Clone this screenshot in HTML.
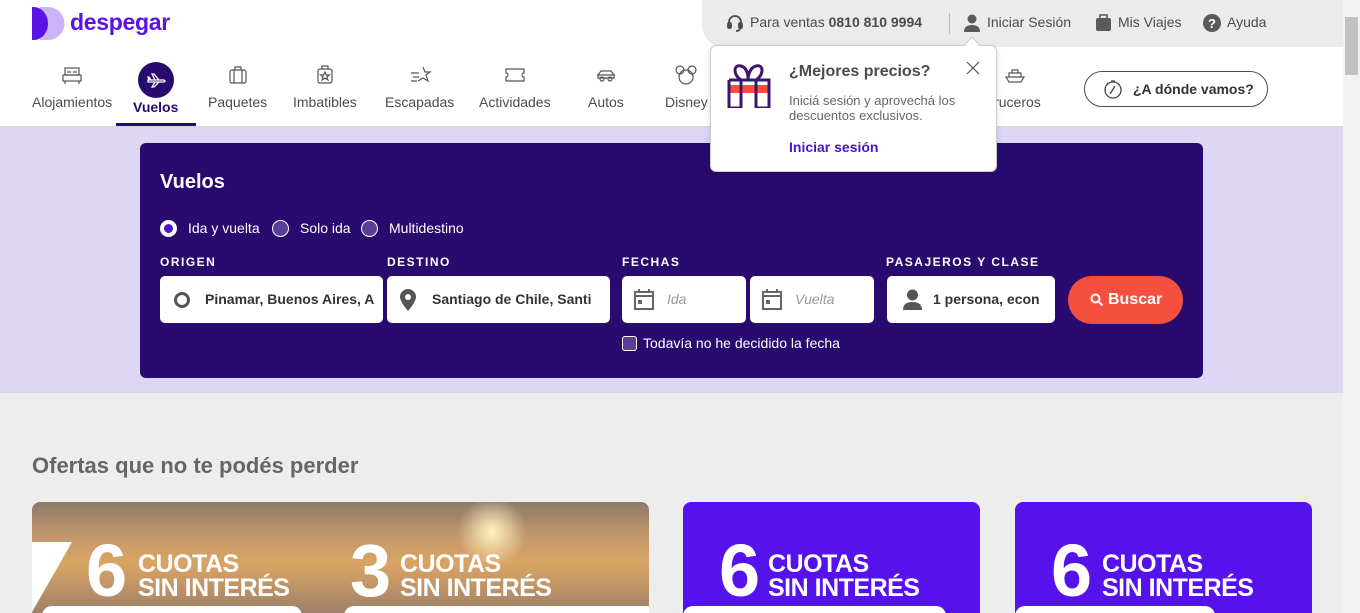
<!DOCTYPE html>
<html><head><meta charset="utf-8"><style>
*{box-sizing:border-box;margin:0;padding:0}
body{width:1360px;height:613px;overflow:hidden;font-family:"Liberation Sans",sans-serif;background:#ededed;position:relative;color:#4b4b4b}
.abs{position:absolute}
.nav{left:0;top:0;width:1343px;height:127px;background:#fff;border-bottom:1px solid #d6d6d6}
.topbar{left:702px;top:0;width:641px;height:47px;background:#ebebeb;border-bottom-left-radius:22px;font-size:14px;color:#4b4b4b}
.topbar span{position:absolute;top:14px;white-space:nowrap}
.item{position:absolute;top:64px;text-align:center;font-size:14px;color:#4b4b4b;white-space:nowrap}
.item svg{display:block;margin:0 auto 8px}
.band{left:0;top:127px;width:1343px;height:266px;background:#ddd6f5}
.box{left:140px;top:143px;width:1063px;height:235px;background:#290a6e;border-radius:6px;color:#fff}
.lbl{position:absolute;top:112px;font-size:12px;font-weight:bold;letter-spacing:1.5px}
.inp{position:absolute;top:133px;height:47px;background:#fff;border-radius:5px;color:#333;font-size:14px;font-weight:bold;overflow:hidden;white-space:nowrap}
.inp span{position:absolute;top:15px}
.radio{position:absolute;top:77px;width:17px;height:17px;border-radius:50%;border:1.5px solid #fff;background:#5a3f96}
.card{top:502px;height:111px;border-radius:8px 8px 0 0;overflow:hidden}
.big{position:absolute;font-size:74px;font-weight:bold;color:#fff;line-height:1;top:32px}
.cu{position:absolute;color:#fff;font-size:25px;font-weight:bold;line-height:24px;top:50px;letter-spacing:-0.5px}
.pill{position:absolute;top:104px;height:20px;background:#fff;border-radius:10px}
</style></head><body>
<div class="abs nav"></div>
<!-- logo -->
<svg class="abs" style="left:32px;top:7px" width="34" height="33" viewBox="0 0 34 33"><path d="M16 0a16.5 16.5 0 0 1 0 33H8V0z" fill="#c9b5f7"/><path d="M0 0h2a14 16.5 0 0 1 0 33H0z" fill="#5a12e8"/></svg>
<div class="abs" style="left:70px;top:9px;font-size:23px;font-weight:bold;color:#5a12e8;letter-spacing:-0.3px">despegar</div>

<div class="abs topbar">
<svg class="abs" style="left:24px;top:14px" width="18" height="18" viewBox="0 0 18 18" fill="none" stroke="#4b4b4b" stroke-width="1.8"><path d="M3 11V8a6 6 0 0 1 12 0v3"/><rect x="2" y="9" width="3" height="5" rx="1" fill="#4b4b4b"/><rect x="13" y="9" width="3" height="5" rx="1" fill="#4b4b4b"/><path d="M14 14q0 3-4 3"/></svg>
<span style="left:48px">Para ventas <b>0810 810 9994</b></span>
<div class="abs" style="left:247px;top:13px;width:1px;height:21px;background:#bbb"></div>
<svg class="abs" style="left:261px;top:13px" width="18" height="20" viewBox="0 0 18 20" fill="#5a5a5a"><circle cx="9" cy="6" r="4.5"/><path d="M1 19q0-7 8-7t8 7z"/></svg>
<span style="left:285px">Iniciar Sesión</span>
<svg class="abs" style="left:393px;top:13px" width="17" height="20" viewBox="0 0 17 20" fill="#5a5a5a"><rect x="1" y="5" width="15" height="13" rx="2"/><path d="M5 5V2h7v3" fill="none" stroke="#5a5a5a" stroke-width="1.6"/></svg>
<span style="left:416px">Mis Viajes</span>
<svg class="abs" style="left:501px;top:14px" width="18" height="18" viewBox="0 0 18 18"><circle cx="9" cy="9" r="9" fill="#5a5a5a"/><text x="9" y="14" font-size="13" font-weight="bold" fill="#fff" text-anchor="middle" font-family="Liberation Sans">?</text></svg>
<span style="left:525px">Ayuda</span>
</div>
<div class="abs" style="left:1343px;top:0;width:17px;height:613px;background:#f1f1f1"></div>
<div class="abs" style="left:1345px;top:17px;width:13px;height:58px;background:#c1c1c1"></div>

<!-- nav items -->
<div class="item" style="left:32px"><svg width="24" height="22" viewBox="0 0 24 22" fill="none" stroke="#555" stroke-width="1.2"><rect x="5" y="4" width="14" height="7"/><rect x="3" y="11" width="18" height="6"/><path d="M5 17v3M19 17v3M7 8h4M13 8h4"/></svg>Alojamientos</div>
<div class="abs" style="left:138px;top:62px;width:36px;height:36px;border-radius:50%;background:#290a6e"></div>
<svg class="abs" style="left:146px;top:70px" width="20" height="20" viewBox="0 0 20 20" fill="none" stroke="#fff" stroke-width="1.3"><path d="M2 10h15q2 0 2 1t-2 1H2zM9 10L6 4h2l5 6M9 12l-3 5h2l5-5M3 10 2 7h1l2 3"/></svg>
<div class="item" style="left:133px;top:99px;font-weight:bold;color:#290a6e">Vuelos</div>
<div class="abs" style="left:116px;top:123px;width:80px;height:3px;background:#290a6e"></div>
<div class="item" style="left:208px"><svg width="24" height="22" viewBox="0 0 24 22" fill="none" stroke="#555" stroke-width="1.2"><rect x="4" y="6" width="16" height="13" rx="2"/><path d="M9 6V3h6v3M8 6v13M16 6v13"/></svg>Paquetes</div>
<div class="item" style="left:293px"><svg width="24" height="22" viewBox="0 0 24 22" fill="none" stroke="#555" stroke-width="1.2"><rect x="5" y="5" width="14" height="14" rx="2"/><path d="M9 5V2h6v3M12 8l1.3 3h3l-2.4 2 1 3-2.9-1.8L9.1 16l1-3-2.4-2h3z"/></svg>Imbatibles</div>
<div class="item" style="left:385px"><svg width="24" height="22" viewBox="0 0 24 22" fill="none" stroke="#555" stroke-width="1.2"><path d="M15 3l2 5h5l-4 3 2 6-5-3-5 3M3 9h8M5 13h6M3 17h6"/></svg>Escapadas</div>
<div class="item" style="left:479px"><svg width="24" height="22" viewBox="0 0 24 22" fill="none" stroke="#555" stroke-width="1.2"><path d="M3 5h18v4a2 2 0 0 0 0 4v4H3v-4a2 2 0 0 0 0-4z"/></svg>Actividades</div>
<div class="item" style="left:588px"><svg width="24" height="22" viewBox="0 0 24 22" fill="none" stroke="#555" stroke-width="1.2"><path d="M4 14v-3l3-4h10l3 4v3zM3 11h18"/><circle cx="8" cy="15" r="2"/><circle cx="16" cy="15" r="2"/></svg>Autos</div>
<div class="item" style="left:665px"><svg width="24" height="22" viewBox="0 0 24 22" fill="none" stroke="#555" stroke-width="1.2"><circle cx="6" cy="6" r="4"/><circle cx="18" cy="6" r="4"/><circle cx="12" cy="13" r="7"/></svg>Disney</div>
<div class="item" style="left:990px"><svg width="24" height="22" viewBox="0 0 24 22" fill="none" stroke="#555" stroke-width="1.2"><path d="M3 13h18l-3 5H6zM6 13V9h12v4M9 9V6h6v3"/></svg><span style="margin-left:-6px">Cruceros</span></div>
<div class="abs" style="left:1084px;top:71px;width:184px;height:36px;border:1.5px solid #4b4b4b;border-radius:18px;font-size:14px;font-weight:bold;color:#333"><svg class="abs" style="left:17px;top:6px" width="22" height="22" viewBox="0 0 22 22" fill="none" stroke="#444" stroke-width="1.3"><circle cx="11" cy="12" r="8"/><path d="M9 3h4M8 16l5-8M5 6l1-1"/></svg><span class="abs" style="left:48px;top:9px">¿A dónde vamos?</span></div>

<div class="abs band"></div>
<div class="abs box">
<div class="abs" style="left:20px;top:28px;font-size:20px;font-weight:bold">Vuelos</div>
<div class="radio" style="left:20px;border:4px solid #fff;background:#4a14c8"></div>
<div class="abs" style="left:48px;top:77px;font-size:14px">Ida y vuelta</div>
<div class="radio" style="left:132px"></div>
<div class="abs" style="left:160px;top:77px;font-size:14px">Solo ida</div>
<div class="radio" style="left:221px"></div>
<div class="abs" style="left:249px;top:77px;font-size:14px">Multidestino</div>
<div class="lbl" style="left:20px">ORIGEN</div>
<div class="lbl" style="left:247px">DESTINO</div>
<div class="lbl" style="left:482px">FECHAS</div>
<div class="lbl" style="left:746px">PASAJEROS Y CLASE</div>
<div class="inp" style="left:20px;width:223px"><div class="abs" style="left:14px;top:16px;width:16px;height:16px;border:3.5px solid #555;border-radius:50%"></div><span style="left:45px">Pinamar, Buenos Aires, A</span></div>
<div class="inp" style="left:247px;width:223px"><svg class="abs" style="left:13px;top:13px" width="16" height="22" viewBox="0 0 16 22"><path d="M8 0a8 8 0 0 1 8 8c0 5-8 14-8 14S0 13 0 8a8 8 0 0 1 8-8z" fill="#555"/><circle cx="8" cy="8" r="3" fill="#fff"/></svg><span style="left:45px">Santiago de Chile, Santi</span></div>
<div class="inp" style="left:482px;width:124px"><svg class="abs" style="left:12px;top:13px" width="20" height="21" viewBox="0 0 20 21" fill="none" stroke="#666" stroke-width="2"><rect x="1" y="3" width="18" height="17"/><path d="M1 7h18M5 0v4M15 0v4"/><rect x="5" y="12" width="2" height="2" fill="#666"/></svg><span style="left:45px;font-weight:normal;font-style:italic;color:#999">Ida</span></div>
<div class="inp" style="left:610px;width:124px"><svg class="abs" style="left:12px;top:13px" width="20" height="21" viewBox="0 0 20 21" fill="none" stroke="#666" stroke-width="2"><rect x="1" y="3" width="18" height="17"/><path d="M1 7h18M5 0v4M15 0v4"/><rect x="5" y="12" width="2" height="2" fill="#666"/></svg><span style="left:45px;font-weight:normal;font-style:italic;color:#999">Vuelta</span></div>
<div class="inp" style="left:747px;width:168px"><svg class="abs" style="left:16px;top:13px" width="19" height="21" viewBox="0 0 19 21" fill="#555"><circle cx="9.5" cy="6" r="5.5"/><path d="M0 21q0-8 9.5-8t9.5 8z"/></svg><span style="left:46px">1 persona, econ</span></div>
<div class="abs" style="left:928px;top:133px;width:115px;height:48px;background:#f5503d;border-radius:24px;font-size:16px;font-weight:bold"><svg class="abs" style="left:22px;top:17px" width="14" height="14" viewBox="0 0 14 14" fill="none" stroke="#fff" stroke-width="2"><circle cx="5.5" cy="5.5" r="4"/><path d="M8.5 8.5l4 4"/></svg><span class="abs" style="left:40px;top:15px">Buscar</span></div>
<div class="abs" style="left:482px;top:193px;width:15px;height:15px;border:1.5px solid #fff;border-radius:3px;background:#5a3f96"></div>
<div class="abs" style="left:503px;top:192px;font-size:14px">Todavía no he decidido la fecha</div>
</div>

<!-- tooltip -->
<div class="abs" style="left:710px;top:45px;width:287px;height:127px;background:#fff;border:1px solid #ccc;border-radius:6px;box-shadow:0 2px 6px rgba(0,0,0,.15)"></div>
<div class="abs" style="left:966px;top:39px;width:12px;height:12px;background:#fff;border-left:1px solid #ccc;border-top:1px solid #ccc;transform:rotate(45deg)"></div>
<svg class="abs" style="left:726px;top:62px" width="46" height="46" viewBox="0 0 46 46" fill="none" stroke="#3d1470" stroke-width="3"><rect x="2" y="23" width="42" height="8" fill="#f5503d" stroke="none"/><path d="M3 18h40v28M3 18v28h12M30 46h13M15 18v28M30 18v28M15 18c-8-5-8-16 0-14s7 14 7 14c0 0 0-12 8-14s8 9 0 14"/></svg>
<div class="abs" style="left:789px;top:63px;font-size:16px;font-weight:bold;color:#4b4b4b">¿Mejores precios?</div>
<div class="abs" style="left:789px;top:93px;font-size:13px;color:#666;line-height:15px">Iniciá sesión y aprovechá los<br>descuentos exclusivos.</div>
<div class="abs" style="left:789px;top:139px;font-size:14px;font-weight:bold;color:#4a14c8">Iniciar sesión</div>
<svg class="abs" style="left:966px;top:61px" width="14" height="14" viewBox="0 0 14 14" stroke="#555" stroke-width="1.2"><path d="M1 1l12 12M13 1 1 13"/></svg>

<div class="abs" style="left:32px;top:453px;font-size:22px;font-weight:bold;color:#666">Ofertas que no te podés perder</div>

<div class="abs card" style="left:32px;width:617px;background:linear-gradient(180deg,#8d7a6a 0%,#c89a6a 35%,#d9a564 55%,#a0806a 100%)">
<div class="abs" style="left:420px;top:0;width:80px;height:60px;background:radial-gradient(circle,#fff3c0,rgba(255,230,150,0) 70%)"></div>
<div class="abs" style="left:0;top:40px;width:0;height:0;border-left:40px solid #fff;border-bottom:70px solid transparent"></div>
<div class="big" style="left:54px">6</div><div class="cu" style="left:106px">CUOTAS<br>SIN INTERÉS</div>
<div class="big" style="left:318px">3</div><div class="cu" style="left:368px">CUOTAS<br>SIN INTERÉS</div>
<div class="pill" style="left:10px;width:260px"></div><div class="pill" style="left:312px;width:320px"></div>
</div>
<div class="abs card" style="left:683px;width:297px;background:#5512ea"><div class="big" style="left:36px">6</div><div class="cu" style="left:85px">CUOTAS<br>SIN INTERÉS</div><div class="pill" style="left:0;width:263px"></div></div>
<div class="abs card" style="left:1015px;width:297px;background:#5512ea"><div class="big" style="left:36px">6</div><div class="cu" style="left:87px">CUOTAS<br>SIN INTERÉS</div><div class="pill" style="left:0;width:200px"></div></div>
</body></html>
